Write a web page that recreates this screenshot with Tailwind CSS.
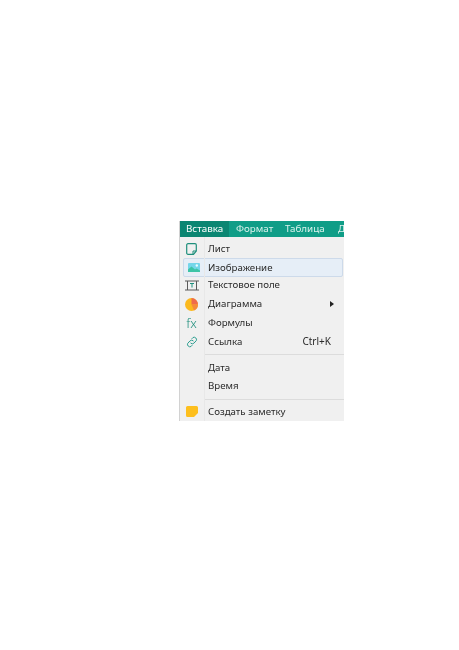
<!DOCTYPE html>
<html lang="ru">
<head>
    <meta charset="UTF-8">
    <title>Вставка</title>
    <script src="https://cdn.jsdelivr.net/npm/@tailwindcss/browser@4"></script>
</head>
<body class="bg-white font-['Noto_Sans',sans-serif] text-[9.7px] text-[#2a2a2a] w-[459px] h-[650px] overflow-hidden pt-[221px] pl-[179px]">

    <div class="w-[165px] h-[200px] overflow-hidden bg-[#f0f0f0] border-l border-[#d2d2d2] blur-[0.35px]">

        <!-- Menu bar -->
        <div class="flex h-[16px] bg-[#109d87] text-white text-[9.8px] leading-[16px] whitespace-nowrap">
            <div class="bg-[#0b8672] w-[49px] pl-[6px] shrink-0">Вставка</div>
            <div class="w-[49px] pl-[7px] shrink-0 text-[#d9f2ec]">Формат</div>
            <div class="w-[53px] pl-[7px] shrink-0 text-[#d9f2ec]">Таблица</div>
            <div class="pl-[7px] shrink-0 text-[#d9f2ec]">Д</div>
        </div>

        <div class="relative pt-[2.6px]">
            <!-- Icon column divider -->
            <div class="absolute left-[24px] top-0 bottom-0 w-px bg-[#e8e8e8]"></div>

            <div class="flex items-center h-[18.8px]">
                <div class="w-[23px] flex justify-center">
                    <svg width="11" height="12" viewBox="0 0 11 12" fill="none"><path d="M2 .7h7a1.3 1.3 0 0 1 1.3 1.3v6L7.5 11.3H2A1.3 1.3 0 0 1 .7 10V2A1.3 1.3 0 0 1 2 .7z" stroke="#1f8f7c" stroke-width="1.2"/><path d="M7 11V8h3" stroke="#1f8f7c" stroke-width="1"/></svg>
                </div>
                <span class="pl-[5px]">Лист</span>
            </div>

            <div class="flex items-center h-[18.8px] ml-[3px] mr-[1px] -mb-px bg-[#e6eef7] border border-[#cddaea] rounded-[2px]">
                <div class="w-[19px] flex justify-center">
                    <svg width="12" height="9" viewBox="0 0 12 9"><rect width="12" height="9" rx="1" fill="#74d6ea"/><circle cx="8.8" cy="2.5" r="1.2" fill="#eafcff"/><path d="M0 9V6.5l3.5-3L7 6.5l1.5-1L12 7.5V9z" fill="#3cc4a6"/></svg>
                </div>
                <span class="pl-[5px]">Изображение</span>
            </div>

            <div class="flex items-center h-[18.8px]">
                <div class="w-[23px] flex justify-center">
                    <svg width="14" height="11" viewBox="0 0 14 11" fill="none"><path d="M0 1h14M0 10h14M2.5 1v9M11.5 1v9" stroke="#5a5a5a" stroke-width="1"/><path d="M5 3.5h4M7 3.5v4" stroke="#1f8f7c" stroke-width="1"/></svg>
                </div>
                <span class="pl-[5px]">Текстовое поле</span>
            </div>

            <div class="flex items-center h-[18.8px]">
                <div class="w-[23px] flex justify-center">
                    <svg width="13" height="13" viewBox="0 0 13 13"><circle cx="6.5" cy="6.5" r="6.5" fill="#fbb91e"/><path d="M6.5 6.5V0a6.5 6.5 0 0 1 6.5 6.5z" fill="#ef6a4c"/><path d="M6.5 6.5H13a6.5 6.5 0 0 1-4 6z" fill="#f58a3c"/></svg>
                </div>
                <span class="pl-[5px]">Диаграмма</span>
                <svg class="ml-auto mr-[10px] mt-[-1px]" width="4" height="6" viewBox="0 0 4 6"><path d="M0 0l4 3-4 3z" fill="#222"/></svg>
            </div>

            <div class="flex items-center h-[18.8px]">
                <div class="w-[23px] flex justify-center font-light text-[13px] text-[#1f8f7c] leading-none">fx</div>
                <span class="pl-[5px]">Формулы</span>
            </div>

            <div class="flex items-center h-[18.8px]">
                <div class="w-[23px] flex justify-center">
                    <svg width="12" height="12" viewBox="0 0 12 12" fill="none" stroke="#2a9d8f" stroke-width="1" stroke-linecap="round"><path d="M4.8 7.2a2.2 2.2 0 0 0 3.1 0l2.4-2.6A2.4 2.4 0 0 0 7 1.5L6 2.6"/><path d="M7.2 4.8a2.2 2.2 0 0 0-3.1 0L1.7 7.4A2.4 2.4 0 0 0 5 10.5l1-1.1"/></svg>
                </div>
                <span class="pl-[5px]">Ссылка</span>
                <span class="ml-auto pr-[13px] text-[10px]">Ctrl+K</span>
            </div>

            <div class="h-px bg-[#dcdcdc] ml-[25px] mt-[3px] mb-[3px]"></div>

            <div class="flex items-center h-[18.8px]">
                <div class="w-[23px]"></div>
                <span class="pl-[5px]">Дата</span>
            </div>

            <div class="flex items-center h-[18.8px]">
                <div class="w-[23px]"></div>
                <span class="pl-[5px]">Время</span>
            </div>

            <div class="h-px bg-[#dcdcdc] ml-[25px] mt-[3px] mb-[2.5px]"></div>

            <div class="flex items-center h-[18.8px]">
                <div class="w-[23px] flex justify-center">
                    <svg width="12" height="11" viewBox="0 0 12 11"><path d="M1.5 0h9A1.5 1.5 0 0 1 12 1.5V7l-4 4H1.5A1.5 1.5 0 0 1 0 9.5v-8A1.5 1.5 0 0 1 1.5 0z" fill="#fdbf1e"/></svg>
                </div>
                <span class="pl-[5px]">Создать заметку</span>
            </div>
        </div>
    </div>

</body>
</html>
